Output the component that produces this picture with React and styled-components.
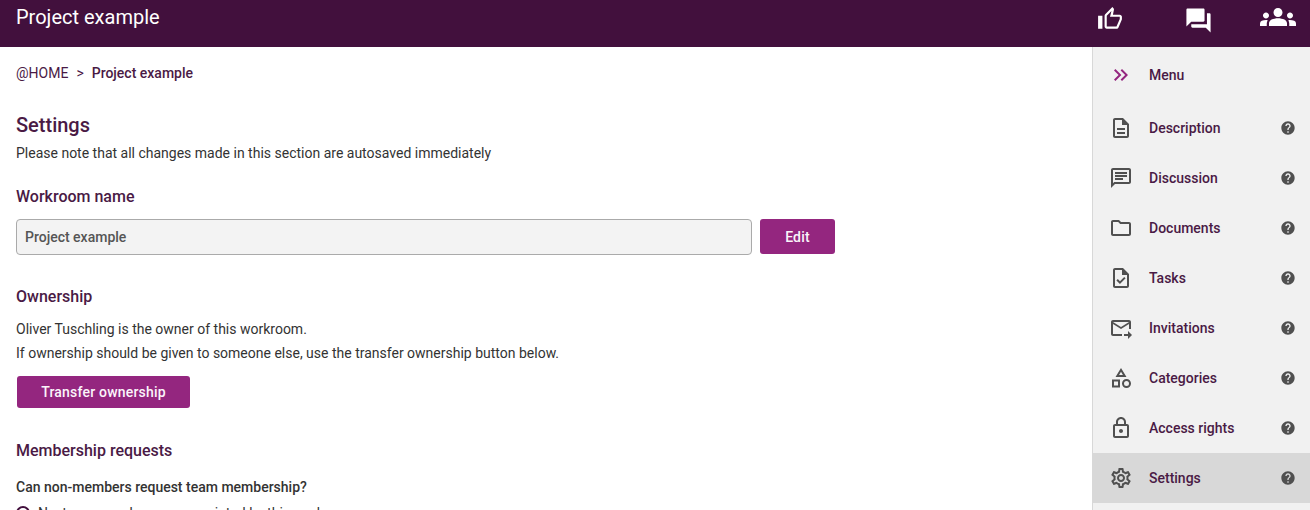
import React from 'react'
import styled, { createGlobalStyle } from 'styled-components'
import {
  MdOutlineThumbUp,
  MdQuestionAnswer,
  MdGroups,
  MdKeyboardDoubleArrowRight,
  MdOutlineDescription,
  MdOutlineChat,
  MdOutlineFolder,
  MdOutlineTask,
  MdOutlineForwardToInbox,
  MdOutlineCategory,
  MdOutlineLock,
  MdOutlineSettings,
  MdHelp,
} from 'react-icons/md'

const GlobalStyle = createGlobalStyle`
  html, body {
    margin: 0;
    height: 100%;
    overflow: hidden;
    font-family: Roboto, "Liberation Sans", sans-serif;
    background: white;
  }
`

const Page = styled.div`
  display: flex;
  flex-direction: column;
  height: 510px;
  overflow: hidden;
`

const Header = styled.header`
  flex: none;
  display: flex;
  justify-content: space-between;
  height: 47px;
  background: #42103d;
  color: white;
`

const Title = styled.div`
  padding: 5px 0 0 16px;
  font-size: 20px;
  line-height: 24px;
`

const HeaderIcons = styled.div`
  display: flex;
  align-items: flex-start;
  width: 218px;
  padding-left: 5px;
  box-sizing: border-box;
`

const HeaderIcon = styled.div`
  display: flex;
  margin-left: ${props => props.$gap || 0}px;
  margin-top: ${props => props.$top}px;
  font-size: ${props => props.$size}px;
`

const Body = styled.div`
  flex: 1;
  display: flex;
  min-height: 0;
`

const Main = styled.main`
  flex: 1;
  padding: 0 16px;
  color: #333;
  font-size: 14px;
`

const Breadcrumbs = styled.div`
  padding-top: 18px;
  line-height: 16px;
  color: #4a1a45;
  span { margin: 0 8px; }
  b { font-weight: 500; }
`

const PageTitle = styled.h1`
  margin: 32px 0 0;
  font-size: 20px;
  font-weight: 500;
  line-height: 24px;
  color: #4a1a45;
`

const Note = styled.p`
  margin: 6px 0 0;
  line-height: 20px;
`

const SectionTitle = styled.h2`
  margin: ${props => props.$top}px 0 0;
  font-size: 16px;
  font-weight: 500;
  line-height: 20px;
  color: #4a1a45;
`

const NameRow = styled.div`
  display: flex;
  gap: 8px;
  margin-top: 12px;
`

const NameField = styled.div`
  box-sizing: border-box;
  width: 736px;
  height: 36px;
  padding: 0 8px;
  display: flex;
  align-items: center;
  border: 1px solid #aaa;
  border-radius: 4px;
  background: #f3f3f3;
  color: #555;
  font-weight: 500;
`

const Button = styled.button`
  box-sizing: border-box;
  width: ${props => props.$width}px;
  height: ${props => props.$height}px;
  border: 0;
  border-radius: 3px;
  padding: 0;
  background: #94267f;
  color: #fbf4fa;
  font: 500 14px Roboto, sans-serif;
  letter-spacing: 0.2px;
`

const OwnerText = styled.div`
  margin-top: 10px;
  line-height: 24px;
`

const TransferButton = styled(Button)`
  display: block;
  margin: 11px 0 0 1px;
`

const Question = styled.div`
  margin-top: 16px;
  line-height: 20px;
  font-weight: 500;
`

const RadioRow = styled.div`
  display: flex;
  align-items: center;
  gap: 8px;
  margin-top: 6px;
  line-height: 20px;
`

const Radio = styled.span`
  box-sizing: border-box;
  width: 14px;
  height: 14px;
  border: 2px solid #42103d;
  border-radius: 50%;
`

const Sidebar = styled.nav`
  flex: none;
  box-sizing: border-box;
  width: 218px;
  padding-top: 3px;
  background: #f1f1f1;
  border-left: 1px solid #d8d8d8;
`

const MenuHeading = styled.div`
  display: flex;
  align-items: center;
  height: 50px;
  margin-bottom: 3px;
  padding-left: 16px;
  color: #94267f;
  font-size: 24px;
`

const MenuItem = styled.div`
  display: flex;
  align-items: center;
  height: 50px;
  padding: 0 14px 0 16px;
  background: ${props => (props.$active ? '#d8d8d8' : 'transparent')};
  color: #505050;
  font-size: 24px;
`

const MenuLabel = styled.span`
  flex: 1;
  margin-left: 16px;
  color: #4a1a45;
  font-size: 14px;
  font-weight: 500;
`

const Help = styled(MdHelp)`
  font-size: 16px;
  color: #505050;
`

const menuItems = [
  { label: 'Description', Icon: MdOutlineDescription },
  { label: 'Discussion', Icon: MdOutlineChat },
  { label: 'Documents', Icon: MdOutlineFolder },
  { label: 'Tasks', Icon: MdOutlineTask },
  { label: 'Invitations', Icon: MdOutlineForwardToInbox },
  { label: 'Categories', Icon: MdOutlineCategory },
  { label: 'Access rights', Icon: MdOutlineLock },
  { label: 'Settings', Icon: MdOutlineSettings, active: true },
]

export default function App() {
  return (
    <Page>
      <GlobalStyle />
      <Header>
        <Title>Project example</Title>
        <HeaderIcons>
          <HeaderIcon $size={26} $top={6}><MdOutlineThumbUp /></HeaderIcon>
          <HeaderIcon $size={29} $top={6} $gap={61}><MdQuestionAnswer /></HeaderIcon>
          <HeaderIcon $size={36} $top={-1} $gap={47}><MdGroups /></HeaderIcon>
        </HeaderIcons>
      </Header>
      <Body>
        <Main>
          <Breadcrumbs>@HOME<span>&gt;</span><b>Project example</b></Breadcrumbs>
          <PageTitle>Settings</PageTitle>
          <Note>Please note that all changes made in this section are autosaved immediately</Note>
          <SectionTitle $top={24}>Workroom name</SectionTitle>
          <NameRow>
            <NameField>Project example</NameField>
            <Button $width={75} $height={35}>Edit</Button>
          </NameRow>
          <SectionTitle $top={32}>Ownership</SectionTitle>
          <OwnerText>
            Oliver Tuschling is the owner of this workroom.<br />
            If ownership should be given to someone else, use the transfer ownership button below.
          </OwnerText>
          <TransferButton $width={173} $height={32}>Transfer ownership</TransferButton>
          <SectionTitle $top={33}>Membership requests</SectionTitle>
          <Question>Can non-members request team membership?</Question>
          <RadioRow><Radio />No, team members are appointed by this workroom</RadioRow>
        </Main>
        <Sidebar>
          <MenuHeading>
            <MdKeyboardDoubleArrowRight />
            <MenuLabel>Menu</MenuLabel>
          </MenuHeading>
          {menuItems.map(({ label, Icon, active }) => (
            <MenuItem key={label} $active={active}>
              <Icon />
              <MenuLabel>{label}</MenuLabel>
              <Help />
            </MenuItem>
          ))}
        </Sidebar>
      </Body>
    </Page>
  )
}
